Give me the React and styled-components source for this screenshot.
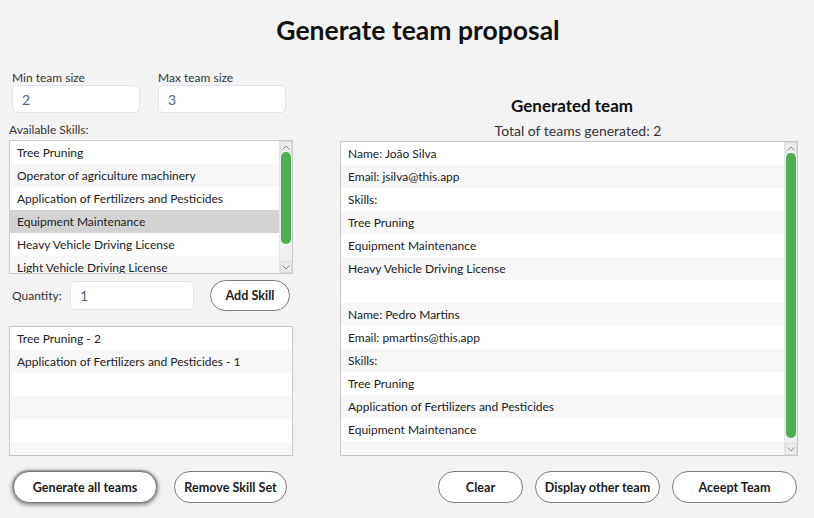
import React from "react";
import styled, { createGlobalStyle } from "styled-components";

const Global = createGlobalStyle`
  html, body { margin: 0; padding: 0; background: #f3f3f3; }
  body { font-family: "Lato", "Open Sans", sans-serif; color: #222; }
  * { box-sizing: border-box; }
`;

const Page = styled.div`
  width: 814px;
  height: 518px;
  background: #f3f3f3;
  display: flex;
  flex-direction: column;
  overflow: hidden;
`;

const Header = styled.h1`
  margin: 0;
  height: 60px;
  padding-left: 22px;
  display: flex;
  align-items: center;
  justify-content: center;
  font-family: "Lato", sans-serif;
  font-weight: 700;
  font-size: 26.5px;
  color: #111;
`;

const Body = styled.div`
  display: flex;
  padding: 0 16px 0 9px;
  gap: 47px;
`;

const LeftCol = styled.div`
  width: 284px;
  display: flex;
  flex-direction: column;
`;

const RightCol = styled.div`
  width: 458px;
  display: flex;
  flex-direction: column;
`;

const SizeRow = styled.div`
  display: flex;
  gap: 18px;
  margin-top: 10px;
  padding-left: 3px;
`;

const Field = styled.div`
  display: flex;
  flex-direction: column;
  width: 128px;
`;

const Label = styled.label`
  font-size: 12px;
  line-height: 15px;
  height: 15px;
  color: #333;
`;

const TextInput = styled.div`
  height: ${(p) => p.$h || 28}px;
  width: ${(p) => (p.$w ? p.$w + "px" : "100%")};
  background: #fff;
  border: 1px solid #dfe4ec;
  border-radius: 5px;
  padding-left: 9px;
  display: flex;
  align-items: center;
  font-size: 14px;
  color: #55627f;
`;

const SectionLabel = styled(Label)`
  margin-top: 9px;
`;

const ListBox = styled.div`
  margin-top: ${(p) => p.$mt || 0}px;
  height: ${(p) => p.$h}px;
  border: 1px solid #c9c9c9;
  background: #fff;
  display: grid;
  grid-template-columns: 1fr ${(p) => (p.$scroll ? "13px" : "0px")};
  overflow: hidden;
`;

const Rows = styled.div`
  display: flex;
  flex-direction: column;
  overflow: hidden;
`;

const Row = styled.div`
  flex: 0 0 23px;
  height: 23px;
  display: flex;
  align-items: center;
  padding-left: 7px;
  font-size: 12px;
  color: #222;
  white-space: nowrap;
  background: ${(p) => (p.$selected ? "#d3d3d3" : p.$alt ? "#f7f7f7" : "#ffffff")};
`;

const ScrollBar = styled.div`
  display: flex;
  flex-direction: column;
  background: #f0f0f0;
  border-left: 1px solid #e6e6e6;
`;

const ArrowBtn = styled.div`
  height: 12px;
  flex: 0 0 12px;
  display: flex;
  align-items: center;
  justify-content: center;
  background: #ececec;
  border: 1px solid #dcdcdc;
`;

const Track = styled.div`
  flex: 1;
  display: flex;
  flex-direction: column;
  align-items: center;
`;

const Thumb = styled.div`
  width: 10px;
  margin-top: ${(p) => p.$top}px;
  height: ${(p) => p.$height}px;
  background: #4caf50;
  border-radius: 5px;
`;

const QuantityRow = styled.div`
  display: flex;
  align-items: center;
  margin-top: 6px;
  padding-left: 3px;
  height: 31px;
`;

const QtyLabel = styled.span`
  font-size: 12px;
  color: #333;
  width: 58px;
`;

const Pill = styled.button`
  height: 32px;
  width: ${(p) => p.$w}px;
  border-radius: 16px;
  border: 1px solid #7d7d7d;
  background: #fff;
  font-family: "Lato", sans-serif;
  font-weight: 700;
  font-size: 12.6px;
  color: #1c1c1c;
  padding: 0;
  box-shadow: ${(p) => (p.$focused ? "0 0 0 1px #9a9a9a, 0 1px 4px 1px rgba(0,0,0,0.45)" : "none")};
  cursor: pointer;
`;

const AddBtn = styled(Pill)`
  height: 31px;
  margin-left: 16px;
`;

const ButtonRow = styled.div`
  display: flex;
  gap: ${(p) => p.$gap}px;
  margin-top: 15px;
  padding-left: ${(p) => p.$pl || 0}px;
  padding-right: ${(p) => p.$pr || 0}px;
  justify-content: ${(p) => p.$justify || "flex-start"};
`;

const SubTitle = styled.h2`
  margin: 36px 0 0;
  height: 20px;
  line-height: 20px;
  text-align: center;
  font-family: "Lato", sans-serif;
  font-weight: 700;
  font-size: 17px;
  color: #111;
  padding-left: 6px;
`;

const Total = styled.div`
  margin-top: 6px;
  height: 18px;
  line-height: 18px;
  text-align: center;
  font-size: 14px;
  color: #333;
  padding-left: 18px;
`;

const Chevron = ({ up }) => (
  <svg width="8" height="5" viewBox="0 0 8 5">
    <path
      d={up ? "M0.5 4.5 L4 1 L7.5 4.5" : "M0.5 0.5 L4 4 L7.5 0.5"}
      fill="none"
      stroke="#8a8a8a"
      strokeWidth="1"
    />
  </svg>
);

const List = ({ items, height, mt, scroll, selected }) => (
  <ListBox $h={height} $mt={mt} $scroll={!!scroll}>
    <Rows>
      {items.map((t, i) => (
        <Row key={i} $alt={i % 2 === 1} $selected={selected === i}>
          {t}
        </Row>
      ))}
    </Rows>
    {scroll ? (
      <ScrollBar>
        <ArrowBtn>
          <Chevron up />
        </ArrowBtn>
        <Track>
          <Thumb $top={scroll.top} $height={scroll.height} />
        </Track>
        <ArrowBtn>
          <Chevron />
        </ArrowBtn>
      </ScrollBar>
    ) : (
      <div />
    )}
  </ListBox>
);

const skills = [
  "Tree Pruning",
  "Operator of agriculture machinery",
  "Application of Fertilizers and Pesticides",
  "Equipment Maintenance",
  "Heavy Vehicle Driving License",
  "Light Vehicle Driving License",
];

const chosen = [
  "Tree Pruning - 2",
  "Application of Fertilizers and Pesticides - 1",
  "",
  "",
  "",
  "",
];

const team = [
  "Name: João Silva",
  "Email: jsilva@this.app",
  "Skills:",
  "Tree Pruning",
  "Equipment Maintenance",
  "Heavy Vehicle Driving License",
  "",
  "Name: Pedro Martins",
  "Email: pmartins@this.app",
  "Skills:",
  "Tree Pruning",
  "Application of Fertilizers and Pesticides",
  "Equipment Maintenance",
  "",
];

export default function App() {
  return (
    <Page>
      <Global />
      <Header>Generate team proposal</Header>
      <Body>
        <LeftCol>
          <SizeRow>
            <Field>
              <Label>Min team size</Label>
              <TextInput>2</TextInput>
            </Field>
            <Field>
              <Label>Max team size</Label>
              <TextInput>3</TextInput>
            </Field>
          </SizeRow>
          <SectionLabel>Available Skills:</SectionLabel>
          <List items={skills} height={134} mt={3} selected={3} scroll={{ top: -1, height: 92 }} />
          <QuantityRow>
            <QtyLabel>Quantity:</QtyLabel>
            <TextInput $w={124} $h={29}>1</TextInput>
            <AddBtn $w={80}>Add Skill</AddBtn>
          </QuantityRow>
          <List items={chosen} height={130} mt={15} />
          <ButtonRow $gap={17} $pl={4}>
            <Pill $w={144} $focused>Generate all teams</Pill>
            <Pill $w={113}>Remove Skill Set</Pill>
          </ButtonRow>
        </LeftCol>
        <RightCol>
          <SubTitle>Generated team</SubTitle>
          <Total>Total of teams generated: 2</Total>
          <List items={team} height={315} mt={1} scroll={{ top: -1, height: 285 }} />
          <ButtonRow $gap={12} $pr={1} $justify="flex-end">
            <Pill $w={85}>Clear</Pill>
            <Pill $w={125}>Display other team</Pill>
            <Pill $w={125}>Aceept Team</Pill>
          </ButtonRow>
        </RightCol>
      </Body>
    </Page>
  );
}
